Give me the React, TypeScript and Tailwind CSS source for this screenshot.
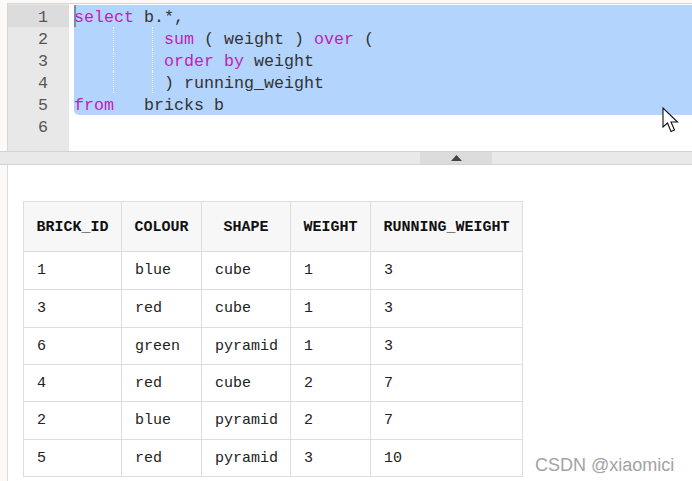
import React from 'react'

const KW = 'text-[#c41cb8]'

const cols = [
  { label: 'BRICK_ID', w: 'w-[98px]' },
  { label: 'COLOUR', w: 'w-[80px]' },
  { label: 'SHAPE', w: 'w-[89px]' },
  { label: 'WEIGHT', w: 'w-[80px]' },
  { label: 'RUNNING_WEIGHT', w: 'w-[152px]' },
]

const rows = [
  { id: '1', colour: 'blue', shape: 'cube', weight: '1', running: '3', h: 'h-[38px]' },
  { id: '3', colour: 'red', shape: 'cube', weight: '1', running: '3', h: 'h-[38px]' },
  { id: '6', colour: 'green', shape: 'pyramid', weight: '1', running: '3', h: 'h-[37px]' },
  { id: '4', colour: 'red', shape: 'cube', weight: '2', running: '7', h: 'h-[37px]' },
  { id: '2', colour: 'blue', shape: 'pyramid', weight: '2', running: '7', h: 'h-[38px]' },
  { id: '5', colour: 'red', shape: 'pyramid', weight: '3', running: '10', h: 'h-[37px]' },
]

function Guides() {
  // dotted indent guides
  return (
    <>
      <span className="absolute left-[39px] -top-[2px] h-[22px] border-l border-dotted border-[#eef3fb]" />
      <span className="absolute left-[78px] -top-[2px] h-[22px] border-l border-dotted border-[#eef3fb]" />
    </>
  )
}

export default function App() {
  const mono = { fontFamily: '"Liberation Mono", "DejaVu Sans Mono", monospace' }
  const td = 'border border-[#dddddd] px-[13px] pt-[2px]'

  return (
    <div className="relative w-[692px] h-[481px] overflow-hidden bg-[#fbfaf8]">
      <div className="pt-[3px] pl-[7px]">
        {/* Editor */}
        <div className="flex h-[148px] bg-white border-t border-l border-[#d9d6d2]">
          <div
            className="w-[61px] shrink-0 bg-[#e8e8e8] pt-px text-[16.67px] leading-[22px] text-[#555] text-right"
            style={mono}
          >
            {['1', '2', '3', '4', '5', '6'].map((n, i) => (
              <div key={n} className={`pr-[21px] ${i === 0 ? 'bg-[#dcdcdc]' : ''}`}>
                <span className="relative top-[2px]">{n}</span>
              </div>
            ))}
          </div>
          <div className="flex-1 pl-[5px] pt-px text-[16.67px] leading-[22px] text-[#333] whitespace-pre" style={mono}>
            <div className="relative bg-[#b3d4fc] rounded-bl-[5px]">
              <span className="absolute left-0 top-0 w-[2px] h-[22px] bg-[#7d8ca3]" />
              <div className="relative top-[2px]">
                <div><span className={KW}>select</span> b.*,</div>
                <div className="relative">
                  <Guides />
                  {'         '}<span className={KW}>sum</span> ( weight ) <span className={KW}>over</span> (
                </div>
                <div className="relative">
                  <Guides />
                  {'         '}<span className={KW}>order</span> <span className={KW}>by</span> weight
                </div>
                <div className="relative">
                  <Guides />
                  {'         '}) running_weight
                </div>
                <div><span className={KW}>from</span>{'   '}bricks b</div>
              </div>
            </div>
            <div>{' '}</div>
          </div>
        </div>
      </div>

      {/* Splitter */}
      <div className="flex h-[14px] bg-[#e9e9e9] border-t border-b border-[#d3d3d3]">
        <div className="w-[72px] ml-[420px] bg-[#dcdcdc] flex items-center justify-center">
          <svg width="11" height="6" viewBox="0 0 11 6">
            <path d="M0 6 L5.5 0 L11 6 Z" fill="#444" />
          </svg>
        </div>
      </div>

      {/* Results */}
      <div className="ml-[7px] h-full bg-white border-l border-[#dedbd7] pl-[15px] pt-[36px]">
        <table className="table-fixed w-[499px] border-collapse text-[15px] text-[#222]" style={mono}>
          <thead>
            <tr className="h-[50px] bg-[#f7f7f7]">
              {cols.map((c) => (
                <th
                  key={c.label}
                  className={`${c.w} border border-[#dddddd] px-0 pt-[3px] text-center font-bold text-[#111]`}
                >
                  {c.label}
                </th>
              ))}
            </tr>
          </thead>
          <tbody>
            {rows.map((r) => (
              <tr key={r.id} className={r.h}>
                <td className={td}>{r.id}</td>
                <td className={td}>{r.colour}</td>
                <td className={td}>{r.shape}</td>
                <td className={td}>{r.weight}</td>
                <td className={td}>{r.running}</td>
              </tr>
            ))}
          </tbody>
        </table>
      </div>

      {/* Mouse pointer */}
      <svg className="absolute left-[662px] top-[107px]" width="20" height="27" viewBox="0 0 20 27">
        <path
          d="M1 1 L1 20 L5.5 16 L9 24.5 L12.5 23 L9 15 L15.5 15 Z"
          fill="white"
          stroke="#111"
          strokeWidth="1.1"
          strokeLinejoin="miter"
        />
      </svg>

      <div
        className="absolute left-[535px] top-[454px] text-[18px] leading-[22px] text-[#a3a3a3]"
        style={{ fontFamily: '"Liberation Sans", Arial, sans-serif' }}
      >
        CSDN @xiaomici
      </div>
    </div>
  )
}
